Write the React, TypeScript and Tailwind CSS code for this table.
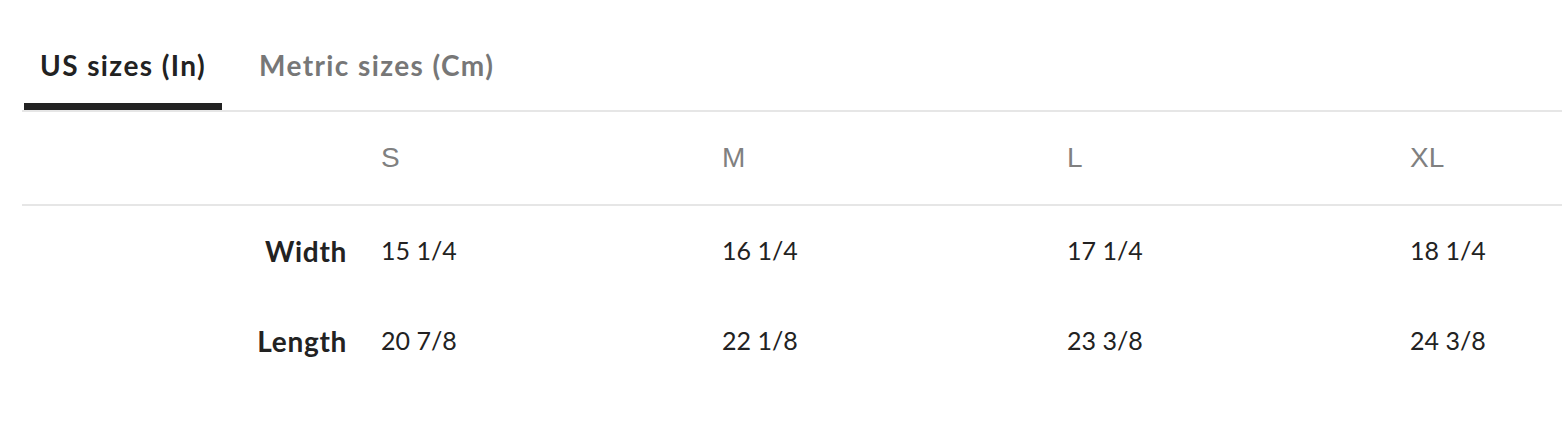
import { useState } from "react";

const sizes = ["S", "M", "L", "XL"];

const rows = [
  { label: "Width", values: ["15 1/4", "16 1/4", "17 1/4", "18 1/4"] },
  { label: "Length", values: ["20 7/8", "22 1/8", "23 3/8", "24 3/8"] },
];

const App = () => {
  const [tab, setTab] = useState<"us" | "metric">("us");

  return (
    <div className="min-h-screen bg-white pl-[22px] font-['Lato',sans-serif]">
      <div className="flex h-[112px] items-stretch border-b-2 border-[#e6e6e6] pl-[2px]">
        <button
          type="button"
          onClick={() => setTab("us")}
          className={`flex items-center border-b-[7px] px-4 pt-[27px] text-[28px] font-bold tracking-[1.4px] ${
            tab === "us"
              ? "border-[#222222] text-[#222222]"
              : "border-transparent text-[#777777]"
          }`}
        >
          US sizes (In)
        </button>
        <button
          type="button"
          onClick={() => setTab("metric")}
          className={`ml-[21px] flex items-center border-b-[7px] px-4 pt-[27px] text-[28px] font-bold tracking-[1.4px] ${
            tab === "metric"
              ? "border-[#222222] text-[#222222]"
              : "border-transparent text-[#777777]"
          }`}
        >
          Metric sizes (Cm)
        </button>
      </div>

      <div className="grid h-[94px] grid-cols-[359px_341px_345px_343px_1fr] items-center border-b-2 border-[#e6e6e6] font-['Liberation_Sans',sans-serif] text-[28px] text-[#808080]">
        <div />
        {sizes.map((s) => (
          <div key={s}>{s}</div>
        ))}
      </div>

      {rows.map((row) => (
        <div
          key={row.label}
          className="grid h-[90px] grid-cols-[359px_341px_345px_343px_1fr] items-center text-[25px] text-[#222222]"
        >
          <div className="pr-[34px] text-right text-[28px] font-bold tracking-[0.7px]">
            {row.label}
          </div>
          {row.values.map((v) => (
            <div key={v}>{v}</div>
          ))}
        </div>
      ))}
    </div>
  );
};

export default App;
